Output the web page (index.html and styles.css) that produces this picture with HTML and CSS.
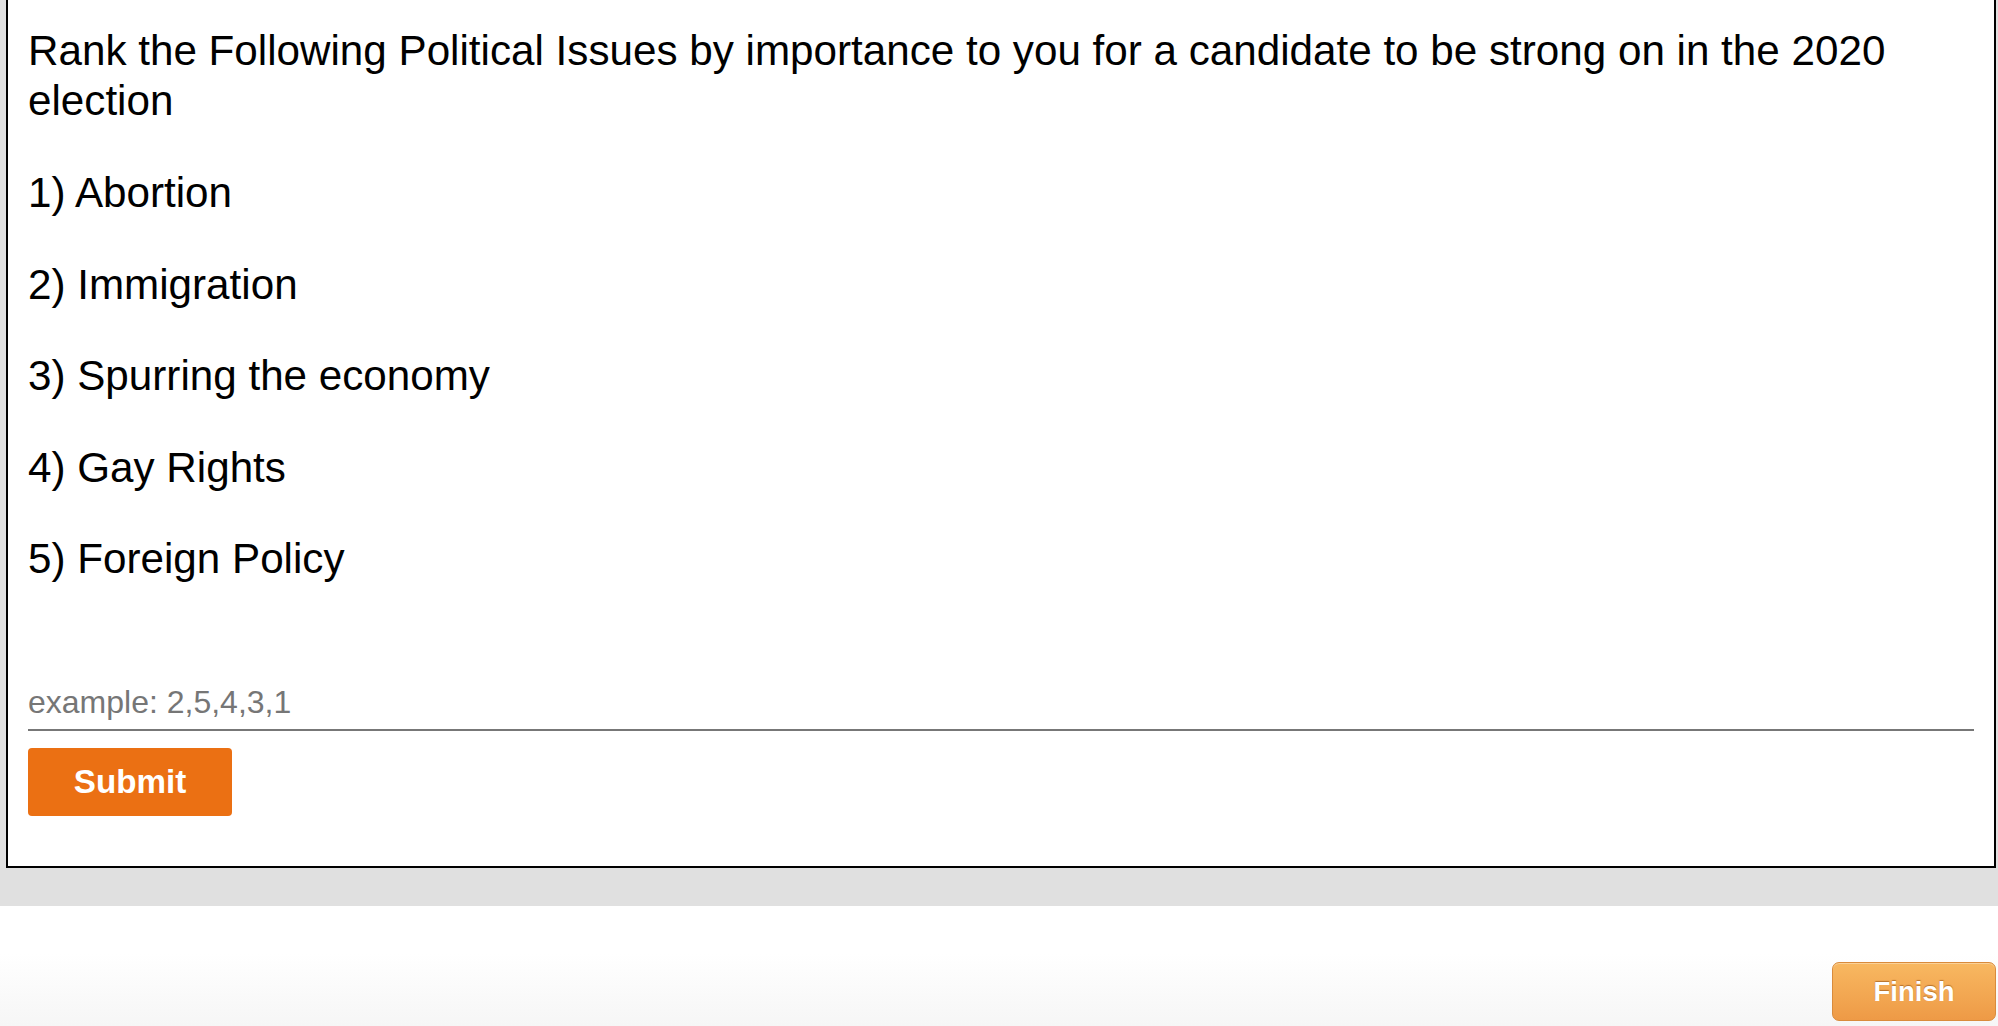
FILE: index.html
```html
<!DOCTYPE html>
<html lang="en">
<head>
<meta charset="utf-8">
<title>Survey question</title>
<link rel="stylesheet" href="styles.css">
</head>
<body>
<div class="stage">
  <div class="card">
    <p class="question">Rank the Following Political Issues by importance to you for a candidate to be strong on in the 2020 election</p>
    <p class="item">1) Abortion</p>
    <p class="item">2) Immigration</p>
    <p class="item">3) Spurring the economy</p>
    <p class="item">4) Gay Rights</p>
    <p class="item">5) Foreign Policy</p>
    <form class="answer">
      <input class="answer-input" type="text" placeholder="example: 2,5,4,3,1">
      <button class="submit" type="button">Submit</button>
    </form>
  </div>
</div>
<div class="footer">
  <button class="finish" type="button">Finish</button>
</div>
</body>
</html>
```

FILE: styles.css
```css
* { box-sizing: border-box; }

html, body {
  margin: 0;
  padding: 0;
  background: #ffffff;
  font-family: "Liberation Sans", Arial, Helvetica, sans-serif;
  color: #000;
}

.stage {
  background: #e0e0e0;
  padding: 0 2px 38px 6px;
}

.card {
  background: #fff;
  border: 2px solid #000;
  border-top: none;
  padding: 26px 20px 50px 20px;
}

.question {
  margin: 0;
  font-size: 42.2px;
  line-height: 50px;
}

.item {
  margin: 42px 0 0 0;
  font-size: 42.2px;
  line-height: 50px;
}

.item + .item {
  margin-top: 41.5px;
}

.answer {
  margin: 98px 0 0 0;
  display: flex;
  flex-direction: column;
  align-items: flex-start;
}

.answer-input {
  display: block;
  width: 100%;
  border: none;
  border-bottom: 2px solid #777;
  padding: 0 0 7px 0;
  margin: 0;
  font-family: "Liberation Sans", Arial, Helvetica, sans-serif;
  font-size: 32px;
  line-height: 40px;
  height: 49px;
  outline: none;
  background: transparent;
  color: #333;
}

.answer-input::placeholder {
  color: #767676;
}

.submit {
  margin-top: 17px;
  width: 204px;
  height: 68px;
  background: #eb7013;
  color: #fff;
  border: none;
  border-radius: 4px;
  font-family: "Liberation Sans", Arial, Helvetica, sans-serif;
  font-weight: bold;
  font-size: 33.2px;
  padding: 0;
}

.footer {
  height: 120px;
  background: linear-gradient(to bottom, #ffffff 0%, #ffffff 40%, #f6f6f6 100%);
  display: flex;
  justify-content: flex-end;
  align-items: flex-end;
  padding: 0 2px 5px 0;
}

.finish {
  width: 164px;
  height: 59px;
  border: 1px solid #d98b3c;
  border-radius: 7px;
  background: linear-gradient(to bottom, #f8b861 0%, #ee9a46 100%);
  box-shadow: inset 0 1px 0 rgba(255,255,255,0.35);
  color: #fff;
  font-family: "Liberation Sans", Arial, Helvetica, sans-serif;
  font-weight: bold;
  font-size: 27.5px;
  text-shadow: 0 -1px 1px rgba(130, 65, 10, 0.55);
  padding: 0;
}
```
